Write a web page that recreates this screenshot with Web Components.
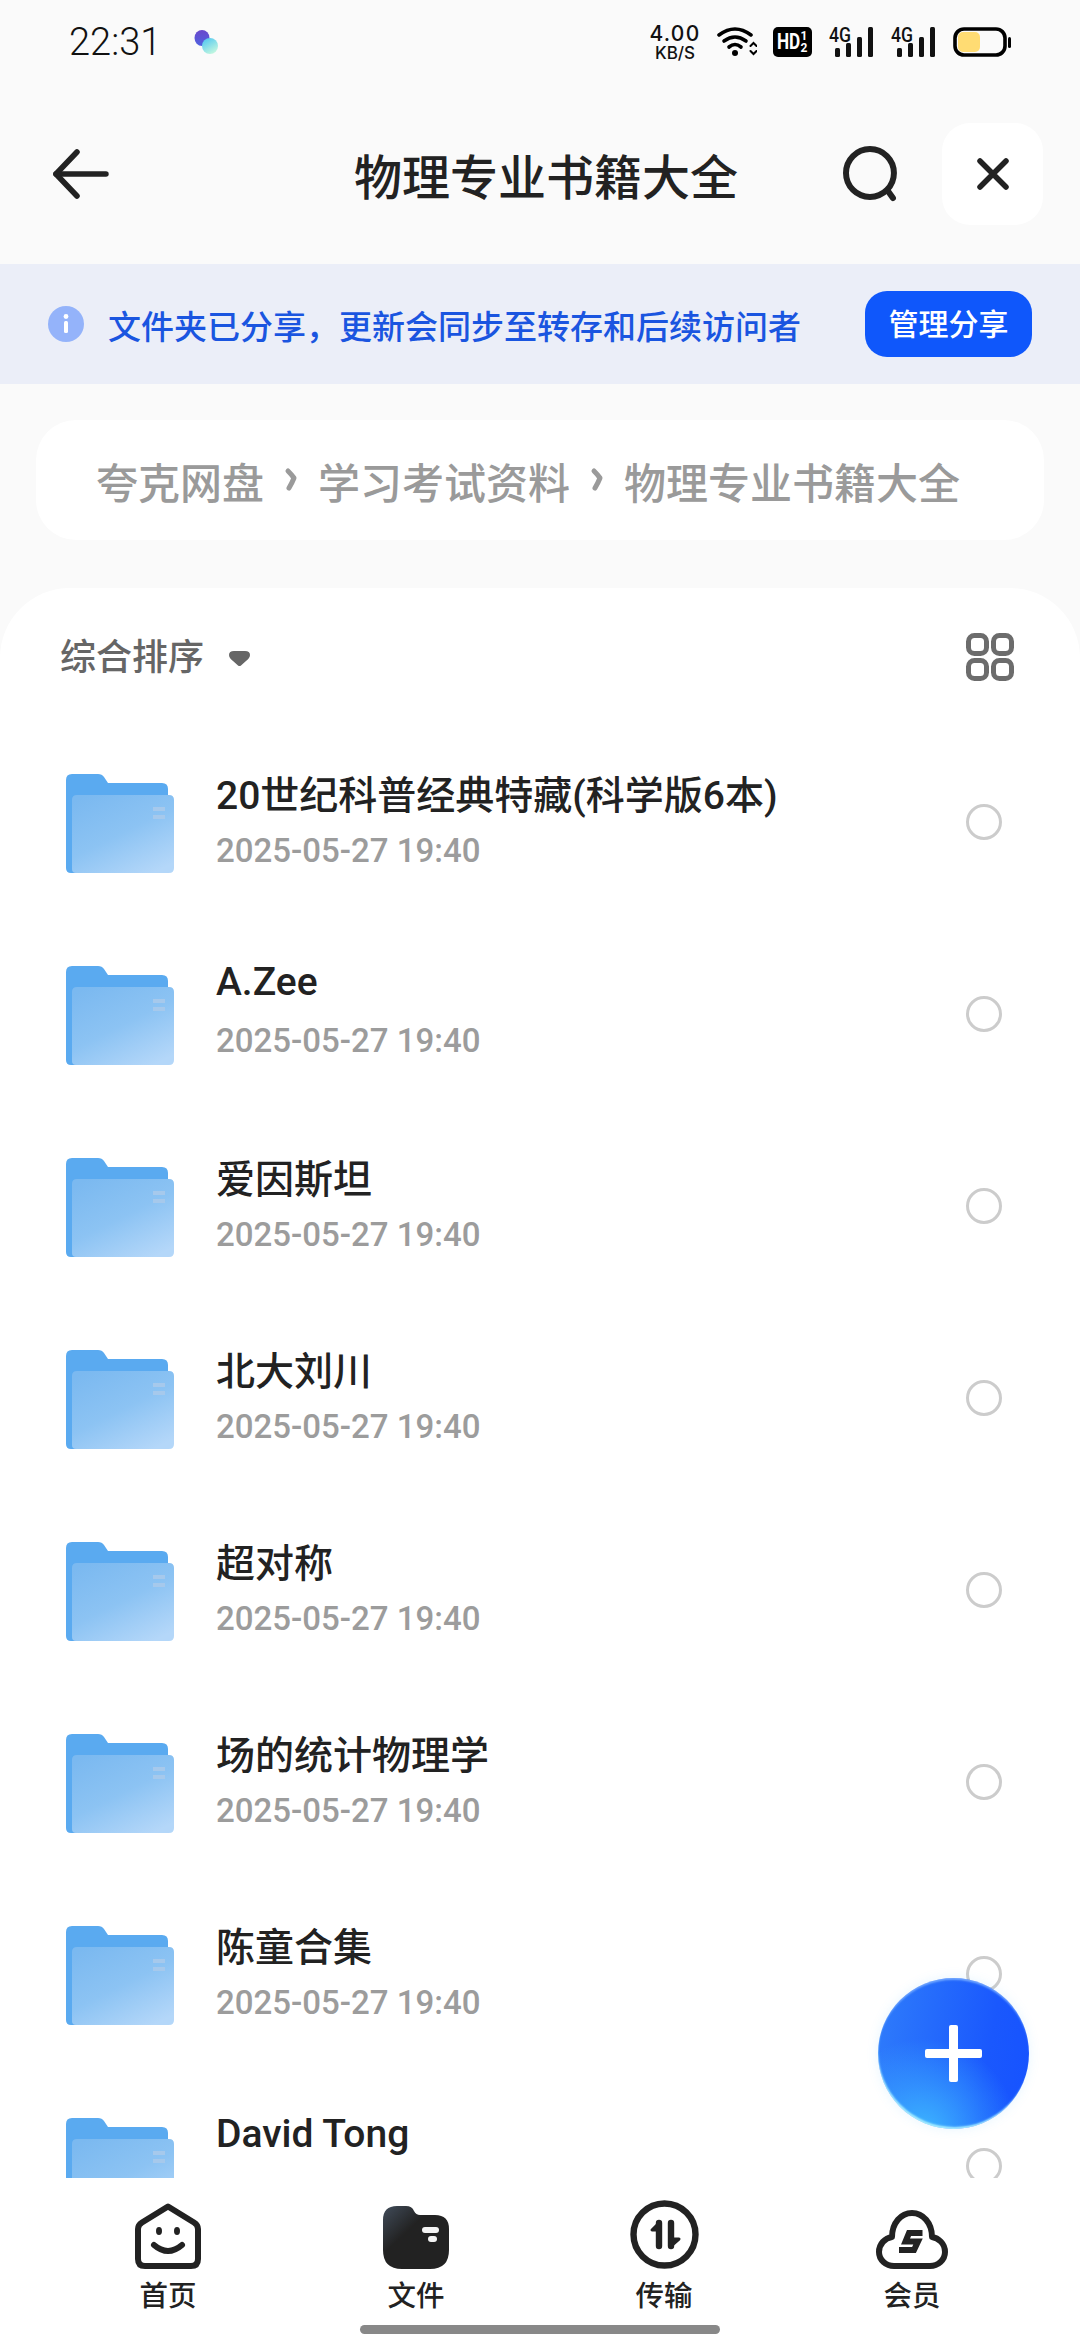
<!DOCTYPE html>
<html>
<head>
  <style>
    html, body { margin: 0; padding: 0; background: #fafafa; }
    body { font-family: Roboto, "Noto Sans CJK SC", sans-serif; }
  </style>
</head>
<body>
  <app-shell>
    <status-bar></status-bar>
    <top-bar title="物理专业书籍大全"></top-bar>
    <notice-banner action="管理分享">文件夹已分享，更新会同步至转存和后续访问者</notice-banner>
    <path-crumb path="夸克网盘,学习考试资料,物理专业书籍大全"></path-crumb>
    <file-sheet>
      <file-row name="20世纪科普经典特藏(科学版6本)" date="2025-05-27 19:40"></file-row>
      <file-row name="A.Zee" date="2025-05-27 19:40" latin></file-row>
      <file-row name="爱因斯坦" date="2025-05-27 19:40"></file-row>
      <file-row name="北大刘川" date="2025-05-27 19:40"></file-row>
      <file-row name="超对称" date="2025-05-27 19:40"></file-row>
      <file-row name="场的统计物理学" date="2025-05-27 19:40"></file-row>
      <file-row name="陈童合集" date="2025-05-27 19:40"></file-row>
      <!-- date of this row sits under the tab bar -->
      <file-row name="David Tong" latin></file-row>
    </file-sheet>
    <tab-bar></tab-bar>
    <add-button></add-button>
  </app-shell>

  <script>
    class AppShell extends HTMLElement {
      constructor() {
        super();
        this.attachShadow({ mode: 'open' }).innerHTML = `
          <style>
            :host {
              display: flex;
              flex-direction: column;
              position: relative;
              width: 1080px;
              height: 2340px;
              overflow: hidden;
              background: #fafafa;
            }
          </style>
          <slot></slot>`;
      }
    }

    class StatusBar extends HTMLElement {
      signal() {
        return `<svg style="display:block;margin-top:-8px" width="46" height="38" viewBox="0 -8 46 38">
          <text x="0" y="15" font-family="Roboto" font-weight="500" font-size="20" textLength="22" lengthAdjust="spacingAndGlyphs" fill="#111">4G</text>
          <rect x="6" y="21" width="5" height="9" rx="1.5" fill="#111"/>
          <rect x="17" y="16" width="5" height="14" rx="1.5" fill="#111"/>
          <rect x="28" y="10" width="5" height="20" rx="1.5" fill="#111"/>
          <rect x="39" y="0" width="5" height="30" rx="1.5" fill="#111"/>
        </svg>`;
      }
      constructor() {
        super();
        this.attachShadow({ mode: 'open' }).innerHTML = `
          <style>
            :host {
              display: flex;
              align-items: flex-start;
              box-sizing: border-box;
              height: 100px;
              padding: 27px 69px 0 69px;
              color: #111;
            }
            .time { font: 300 38px/30px Roboto, sans-serif; width: 92px; }
            .dots { margin: 2px 0 0 33px; }
            .right { display: flex; margin-left: auto; }
            .speed { width: 52px; margin-top: -3px; text-align: center; font-family: Inter, Roboto, sans-serif; font-weight: 500; }
            .speed b { display: block; font-weight: 500; font-size: 21px; line-height: 20px; letter-spacing: 1.2px; }
            .speed span { display: block; font-size: 17px; line-height: 18px; }
            .wifi { margin-left: 16px; }
            .hd {
              display: flex;
              align-items: center;
              justify-content: center;
              box-sizing: border-box;
              width: 39px;
              height: 30px;
              margin-left: 16px;
              border-radius: 5px;
              background: #000;
              color: #fff;
              font: 700 22px/30px Roboto, sans-serif;
            }
            .hd i { font-style: normal; display: inline-block; width: 23px; transform: scaleX(.78); transform-origin: left center; }
            .hd u { text-decoration: none; display: block; font-size: 12px; line-height: 12px; width: 8px; text-align: center; }
            .sig1 { margin-left: 17px; }
            .sig2 { margin-left: 16px; }
            .batt { margin-left: 16px; }
          </style>
          <div class="time">22:31</div>
          <svg class="dots" width="30" height="28" viewBox="0 0 30 28">
            <defs>
              <linearGradient id="d1" x1="0" y1="0" x2="0" y2="1"><stop offset="0" stop-color="#6a48cc"/><stop offset="1" stop-color="#4f62e0"/></linearGradient>
              <linearGradient id="d2" x1="0" y1="0" x2="0.6" y2="1"><stop offset="0" stop-color="#48c4f2"/><stop offset="1" stop-color="#c0f6e0"/></linearGradient>
            </defs>
            <ellipse cx="8" cy="9" rx="7.5" ry="8" fill="url(#d1)"/>
            <ellipse cx="16" cy="17" rx="8" ry="8" fill="url(#d2)"/>
          </svg>
          <div class="right">
            <div class="speed"><b>4.00</b><span>KB/S</span></div>
            <svg class="wifi" width="40" height="30" viewBox="0 0 40 30" fill="none" stroke="#000" stroke-width="3.6" stroke-linecap="round">
              <path d="M2 8 Q18 -4 34 8"/>
              <path d="M7 14 Q18 6 29 14"/>
              <path d="M12 20 Q18 15 24 20"/>
              <circle cx="18" cy="26" r="3" fill="#000" stroke="none"/>
              <path d="M33.5 19 L36.5 16 L39.5 19 M33.5 24 L36.5 27 L39.5 24" stroke-width="2"/>
            </svg>
            <div class="hd"><i>HD</i><span><u>1</u><u>2</u></span></div>
            <span class="sig1">${this.signal()}</span>
            <span class="sig2">${this.signal()}</span>
            <svg class="batt" width="58" height="30" viewBox="0 0 58 30">
              <rect x="2" y="2" width="50" height="26" rx="9" fill="none" stroke="#000" stroke-width="3.6"/>
              <rect x="5" y="5" width="22" height="20" rx="5" fill="#ffdc73"/>
              <rect x="55" y="10" width="3" height="11" rx="1.5" fill="#000"/>
            </svg>
          </div>`;
      }
    }

    class TopBar extends HTMLElement {
      constructor() {
        super();
        this.attachShadow({ mode: 'open' }).innerHTML = `
          <style>
            :host {
              display: flex;
              align-items: center;
              box-sizing: border-box;
              height: 148px;
              padding: 0 37px 0 53px;
            }
            .title {
              margin-left: 245px;
              width: 490px;
              font-size: 48px;
              font-weight: 500;
              color: #222;
              white-space: nowrap;
            }
            .close {
              display: flex;
              align-items: center;
              justify-content: center;
              width: 101px;
              height: 102px;
              margin-left: 43px;
              border-radius: 28px;
              background: #fff;
            }
          </style>
          <svg width="56" height="50" viewBox="0 0 56 50" fill="none" stroke="#222" stroke-width="5.6" stroke-linecap="round" stroke-linejoin="round">
            <path d="M24 3 L3 25 L24 47"/><path d="M3 25 H53"/>
          </svg>
          <div class="title">${this.getAttribute('title')}</div>
          <svg width="56" height="56" viewBox="0 0 56 56" fill="none" stroke="#222" stroke-width="6" stroke-linecap="round">
            <circle cx="27" cy="27" r="24"/><path d="M45 45 L50 52"/>
          </svg>
          <div class="close">
            <svg width="32" height="32" viewBox="0 0 32 32" fill="none" stroke="#222" stroke-width="5.5" stroke-linecap="round">
              <path d="M3 3 L29 29 M29 3 L3 29"/>
            </svg>
          </div>`;
      }
    }

    class NoticeBanner extends HTMLElement {
      constructor() {
        super();
        this.attachShadow({ mode: 'open' }).innerHTML = `
          <style>
            :host {
              display: flex;
              align-items: center;
              box-sizing: border-box;
              height: 120px;
              margin-top: 16px;
              padding: 0 48px 0 48px;
              background: #ebeef8;
            }
            .text {
              margin: 1px 0 0 24px;
              font-size: 33px;
              font-weight: 500;
              color: #1a55e0;
              white-space: nowrap;
            }
            .btn {
              display: flex;
              align-items: center;
              justify-content: center;
              box-sizing: border-box;
              width: 167px;
              height: 66px;
              margin-left: auto;
              padding-bottom: 4px;
              border-radius: 22px;
              background: #0f57fb;
              color: #fff;
              font-size: 30px;
              font-weight: 500;
            }
          </style>
          <svg width="36" height="36" viewBox="0 0 36 36">
            <circle cx="18" cy="18" r="18" fill="#94b3fa"/>
            <circle cx="18" cy="10.5" r="2.4" fill="#fff"/>
            <rect x="16" y="15" width="4" height="12" rx="1.5" fill="#fff"/>
          </svg>
          <div class="text"><slot></slot></div>
          <div class="btn">${this.getAttribute('action')}</div>`;
      }
    }

    class PathCrumb extends HTMLElement {
      constructor() {
        super();
        const chevron = `<svg width="14" height="26" viewBox="0 0 14 26" fill="none" stroke="#9a9a9a" stroke-width="5" stroke-linecap="round" stroke-linejoin="round"><path d="M4 4 Q8 8 10 11 Q8 16 5 21"/></svg>`;
        const parts = this.getAttribute('path').split(',').map(p => `<span>${p}</span>`).join(chevron);
        this.attachShadow({ mode: 'open' }).innerHTML = `
          <style>
            :host {
              display: flex;
              align-items: center;
              gap: 20px;
              box-sizing: border-box;
              height: 120px;
              margin: 36px 36px 0;
              padding: 0 0 0 60px;
              border-radius: 40px;
              background: #fff;
              color: #9a9a9a;
              font-size: 42px;
              font-weight: 500;
              white-space: nowrap;
            }
          </style>
          ${parts}`;
      }
    }

    class FileSheet extends HTMLElement {
      constructor() {
        super();
        this.attachShadow({ mode: 'open' }).innerHTML = `
          <style>
            :host {
              display: block;
              flex: 1;
              min-height: 0;
              margin-top: 48px;
              overflow: hidden;
              border-radius: 70px 70px 0 0;
              background: #fff;
            }
            .sort {
              display: flex;
              align-items: flex-start;
              box-sizing: border-box;
              height: 138px;
              padding: 45px 66px 0 60px;
            }
            .label { margin-top: 1px; font-size: 36px; line-height: 48px; font-weight: 500; color: #666; }
            .caret { margin: 18px 0 0 25px; }
            .grid { margin-left: auto; }
          </style>
          <div class="sort">
            <span class="label">综合排序</span>
            <svg class="caret" width="21" height="15" viewBox="0 0 21 15"><path d="M5 0 H16 Q21 0 21 4 Q21 7 17 10 L12 14.5 Q10.5 15.5 9 14.5 L4 10 Q0 7 0 4 Q0 0 5 0 Z" fill="#666"/></svg>
            <svg class="grid" width="48" height="48" viewBox="0 0 48 48" fill="none" stroke="#6c6c6c" stroke-width="5">
              <rect x="2.5" y="2.5" width="18" height="18" rx="6"/>
              <rect x="27.5" y="2.5" width="18" height="18" rx="6"/>
              <rect x="2.5" y="27.5" width="18" height="18" rx="6"/>
              <rect x="27.5" y="27.5" width="18" height="18" rx="6"/>
            </svg>
          </div>
          <slot></slot>`;
      }
    }

    let folderId = 0;
    class FileRow extends HTMLElement {
      constructor() {
        super();
        const id = 'f' + folderId++;
        this.attachShadow({ mode: 'open' }).innerHTML = `
          <style>
            :host {
              display: flex;
              align-items: center;
              box-sizing: border-box;
              height: 192px;
              padding: 3px 78px 0 66px;
            }
            .info { flex: 1; margin-left: 42px; min-width: 0; }
            .name {
              font-size: 39px;
              line-height: 54px;
              font-weight: 500;
              color: #222;
              white-space: nowrap;
            }
            .date {
              height: 54px;
              margin-top: 1px;
              font-size: 33px;
              line-height: 54px;
              font-weight: 500;
              color: #9c9c9c;
              white-space: nowrap;
            }
            :host([latin]) .name { margin-top: -7px; }
            :host([latin]) .date { margin-top: 5px; margin-bottom: 2px; }
            .radio {
              box-sizing: border-box;
              width: 36px;
              height: 36px;
              margin-top: -3px;
              border: 3px solid #ccc;
              border-radius: 50%;
            }
          </style>
          <svg width="108" height="99" viewBox="0 0 108 99">
            <defs>
              <linearGradient id="${id}" x1="0.15" y1="0" x2="0.8" y2="1">
                <stop offset="0" stop-color="#7bb9f0"/><stop offset="0.5" stop-color="#8cc3f3"/><stop offset="1" stop-color="#b4d7f9"/>
              </linearGradient>
            </defs>
            <path d="M6 0 H32 Q36 0 38 3 L42 9 H96 Q102 9 102 15 V95 Q102 99 98 99 H5 Q0 99 0 94 V6 Q0 0 6 0 Z" fill="#5aaaf0"/>
            <path d="M11 21 H103 Q108 21 108 26 V94 Q108 99 103 99 H10 Q6 99 6 95 V26 Q6 21 11 21 Z" fill="url(#${id})"/>
            <rect x="87" y="33" width="12" height="4" fill="#a6c9ec"/>
            <rect x="87" y="41" width="12" height="4" fill="#a6c9ec"/>
          </svg>
          <div class="info">
            <div class="name">${this.getAttribute('name')}</div>
            <div class="date">${this.getAttribute('date') ?? ''}</div>
          </div>
          <div class="radio"></div>`;
      }
    }

    class TabItem extends HTMLElement {
      constructor() {
        super();
        this.attachShadow({ mode: 'open' }).innerHTML = `
          <style>
            :host {
              display: flex;
              flex-direction: column;
              align-items: center;
              color: #222;
              font-size: 28.5px;
              font-weight: 500;
            }
            .icon { display: flex; align-items: flex-end; justify-content: center; height: 70px; }
            .label { line-height: 40px; margin-top: 8px; }
          </style>
          <div class="icon"><slot></slot></div>
          <div class="label">${this.getAttribute('label')}</div>`;
      }
    }

    class TabBar extends HTMLElement {
      constructor() {
        super();
        this.attachShadow({ mode: 'open' }).innerHTML = `
          <style>
            :host {
              display: grid;
              grid-template-columns: repeat(4, 248px);
              position: relative;
              box-sizing: border-box;
              height: 162px;
              padding: 21px 44px 0;
              background: #fff;
            }
            .bar {
              position: absolute;
              left: 360px;
              top: 147px;
              width: 360px;
              height: 9px;
              border-radius: 5px;
              background: #888;
            }
          </style>
          <slot></slot>
          <div class="bar"></div>`;
        this.innerHTML = `
          <tab-item label="首页">
            <svg width="66" height="66" viewBox="0 0 66 66" fill="none" stroke="#222" stroke-width="6" stroke-linecap="round" stroke-linejoin="round">
              <path d="M33 3.5 L59 19.5 Q63 22 63 26 V56 Q63 63 56 63 H10 Q3 63 3 56 V26 Q3 22 7 19.5 Z"/>
              <ellipse cx="24" cy="28" rx="3" ry="4" fill="#222" stroke="none"/>
              <ellipse cx="42" cy="28" rx="3" ry="4" fill="#222" stroke="none"/>
              <path d="M19 42 Q33 54 47 42"/>
            </svg>
          </tab-item>
          <tab-item label="文件">
            <svg width="66" height="63" viewBox="0 0 66 63">
              <defs>
                <linearGradient id="tabf" x1="0" y1="0" x2="0.7" y2="0.7">
                  <stop offset="0" stop-color="#414c5a"/><stop offset="0.55" stop-color="#222"/><stop offset="1" stop-color="#222"/>
                </linearGradient>
              </defs>
              <path d="M14 0 H23 Q29 0 31 5 Q33 9 37 9 H52 Q66 9 66 23 V44 Q66 63 47 63 H19 Q0 63 0 44 V14 Q0 0 14 0 Z" fill="url(#tabf)"/>
              <rect x="39" y="21" width="17" height="6" rx="3" fill="#f4f4f4"/>
              <rect x="45" y="30" width="9" height="6" rx="3" fill="#f4f4f4"/>
            </svg>
          </tab-item>
          <tab-item label="传输">
            <svg width="69" height="69" viewBox="0 0 69 69" fill="none" stroke="#222" stroke-width="6.4" stroke-linecap="round" stroke-linejoin="round">
              <circle cx="34.5" cy="34.5" r="31"/>
              <path d="M29 23 V46"/>
              <path d="M29 23 L22 30 H29 Z" fill="#222" stroke-width="3"/>
              <path d="M41 23 V46"/>
              <path d="M41 46 L49 39 H41 Z" fill="#222" stroke-width="3"/>
            </svg>
          </tab-item>
          <tab-item label="会员">
            <svg width="72" height="59" viewBox="0 0 72 59" fill="none" stroke="#222" stroke-width="6" stroke-linejoin="round">
              <path d="M18 56 H54 C62 56 69 50 69 42 C69 33 62 28 56 27 C56 13 47 3 36 3 C25 3 16 13 16 27 C9 28 3 34 3 42 C3 50 10 56 18 56 Z"/>
              <path d="M46.5 23 H33 L29.5 31.5 H42 L38 40 H23" stroke-width="6" stroke-linejoin="miter"/>
            </svg>
          </tab-item>`;
      }
    }

    class AddButton extends HTMLElement {
      constructor() {
        super();
        this.attachShadow({ mode: 'open' }).innerHTML = `
          <style>
            :host {
              display: flex;
              align-items: center;
              justify-content: center;
              position: absolute;
              left: 878px;
              top: 1978px;
              width: 151px;
              height: 151px;
              border-radius: 50%;
              background:
                radial-gradient(circle at 30% 102%, rgba(64,190,255,.9) 0, rgba(60,175,255,.5) 26%, rgba(60,170,255,0) 50%),
                linear-gradient(100deg, #2f7dfb 0%, #1a58fd 70%, #1652ff 100%);
              box-shadow: inset 1px -3px 2px -1px #a4ecff, inset 0 3px 2px -1px #6fa6ff, 0 0 12px rgba(90,190,255,.15);
            }
          </style>
          <svg width="57" height="57" viewBox="0 0 57 57">
            <rect x="24" y="0" width="9" height="57" rx="2" fill="#fff"/>
            <rect x="0" y="24" width="57" height="9" rx="2" fill="#fff"/>
          </svg>`;
      }
    }

    customElements.define('app-shell', AppShell);
    customElements.define('status-bar', StatusBar);
    customElements.define('top-bar', TopBar);
    customElements.define('notice-banner', NoticeBanner);
    customElements.define('path-crumb', PathCrumb);
    customElements.define('file-sheet', FileSheet);
    customElements.define('file-row', FileRow);
    customElements.define('tab-item', TabItem);
    customElements.define('tab-bar', TabBar);
    customElements.define('add-button', AddButton);
  </script>
</body>
</html>
